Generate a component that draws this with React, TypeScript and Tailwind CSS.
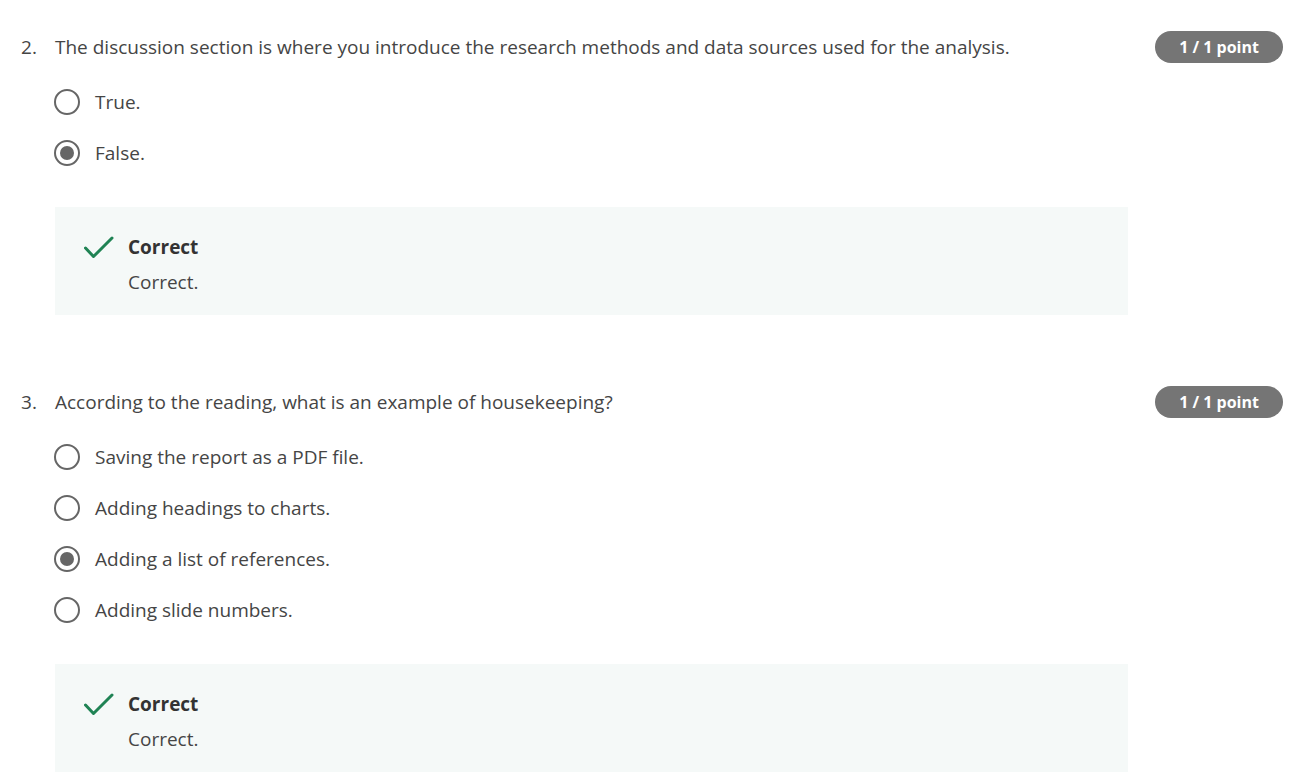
import React from "react";

type Question = {
  num: number;
  text: string;
  options: string[];
  selected: number;
  feedback: string;
};

const questions: Question[] = [
  {
    num: 2,
    text: "The discussion section is where you introduce the research methods and data sources used for the analysis.",
    options: ["True.", "False."],
    selected: 1,
    feedback: "Correct.",
  },
  {
    num: 3,
    text: "According to the reading, what is an example of housekeeping?",
    options: [
      "Saving the report as a PDF file.",
      "Adding headings to charts.",
      "Adding a list of references.",
      "Adding slide numbers.",
    ],
    selected: 2,
    feedback: "Correct.",
  },
];

const Radio = ({ checked }: { checked: boolean }) => (
  <div className="w-[26px] h-[26px] rounded-full border-[2.5px] border-[#666666] flex items-center justify-center shrink-0">
    {checked && <div className="w-[14px] h-[14px] rounded-full bg-[#666666]"></div>}
  </div>
);

const CheckIcon = () => (
  <svg width="30" height="24" viewBox="0 0 30 24" fill="none" className="shrink-0">
    <path
      d="M1.5 13l8 8.5L28 3"
      stroke="#1f8354"
      strokeWidth="3"
      strokeLinecap="round"
      strokeLinejoin="round"
    />
  </svg>
);

const QuestionBlock = ({ q }: { q: Question }) => (
  <div>
    <div className="flex items-center justify-between h-8">
      <div className="flex items-center">
        <span className="w-[34px] pl-[21px] box-content -ml-[21px]">{q.num}.</span>
        <span>{q.text}</span>
      </div>
      <div className="h-8 w-[128px] rounded-full bg-[#757575] text-white font-bold text-[16px] flex items-center justify-center">
        1 / 1 point
      </div>
    </div>
    <div className="mt-[26px] flex flex-col gap-[25px] pl-[33px]">
      {q.options.map((opt, i) => (
        <div key={opt} className="flex items-center h-[26px] gap-[15px]">
          <Radio checked={i === q.selected} />
          <span>{opt}</span>
        </div>
      ))}
    </div>
    <div className="ml-[34px] mt-[41px] w-[1073px] bg-[#f5f9f8] pt-[28px] pb-[21px] pl-[29px] flex gap-[14px]">
      <div className="h-6 flex items-center">
        <CheckIcon />
      </div>
      <div className="flex flex-col gap-[11px]">
        <div className="h-6 leading-6 font-bold text-[#333333]">Correct</div>
        <div className="h-6 leading-6">{q.feedback}</div>
      </div>
    </div>
  </div>
);

export default function App() {
  return (
    <div
      className="min-h-screen bg-white text-[#454545] text-[19px] pt-[31px] pl-[21px] pr-[14px] flex flex-col gap-[71px]"
      style={{ fontFamily: '"Open Sans", "Liberation Sans", sans-serif' }}
    >
      {questions.map((q) => (
        <QuestionBlock key={q.num} q={q} />
      ))}
    </div>
  );
}
